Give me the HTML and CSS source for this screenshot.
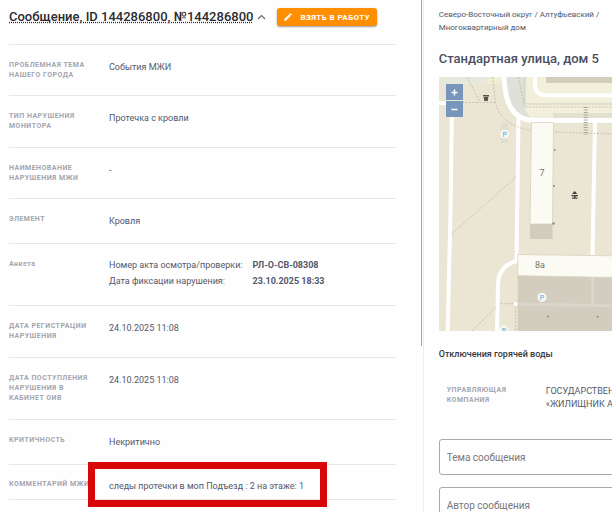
FILE: index.html
```html
<!DOCTYPE html>
<html lang="ru">
<head>
    <meta charset="UTF-8">
    <meta name="viewport" content="width=device-width, initial-scale=1.0">
    <title>Сообщение №144286800</title>
    <link rel="stylesheet" href="styles.css">
</head>
<body>
    <div class="page">
        <main class="details">
            <header class="details-header">
                <h1 class="details-title">Сообщение, ID 144286800, №144286800</h1>
                <button class="toggle-btn" type="button" aria-label="Свернуть">
                    <svg width="9" height="6" viewBox="0 0 9 6"><path d="M1 5l3.500-3.500L8 5" fill="none" stroke="#666" stroke-width="1.1"/></svg>
                </button>
                <button class="take-btn" type="button">
                    <svg width="10" height="10" viewBox="0 0 24 24"><path fill="#fff" d="M3 17.25V21h3.75L17.8 9.94l-3.75-3.75L3 17.25zM20.7 7.04a1 1 0 0 0 0-1.41l-2.34-2.34a1 1 0 0 0-1.41 0l-1.83 1.83 3.75 3.75 1.83-1.83z"/></svg>
                    <span>Взять в работу</span>
                </button>
            </header>

            <dl class="rows">
                <div class="row">
                    <dt class="label">Проблемная тема нашего города</dt>
                    <dd class="value">События МЖИ</dd>
                </div>
                <div class="row roomy">
                    <dt class="label">Тип нарушения монитора</dt>
                    <dd class="value">Протечка с кровли</dd>
                </div>
                <div class="row">
                    <dt class="label">Наименование нарушения МЖИ</dt>
                    <dd class="value">-</dd>
                </div>
                <div class="row">
                    <dt class="label">Элемент</dt>
                    <dd class="value">Кровля</dd>
                </div>
                <div class="row form-row">
                    <dt class="label plain">Анкета</dt>
                    <dd class="value">
                        <table class="form-table">
                            <tr><td>Номер акта осмотра/проверки:</td><td><b>РЛ-О-СВ-08308</b></td></tr>
                            <tr><td>Дата фиксации нарушения:</td><td><b>23.10.2025 18:33</b></td></tr>
                        </table>
                    </dd>
                </div>
                <div class="row roomy">
                    <dt class="label">Дата регистрации нарушения</dt>
                    <dd class="value">24.10.2025 11:08</dd>
                </div>
                <div class="row roomy">
                    <dt class="label">Дата поступления нарушения в кабинет ОИВ</dt>
                    <dd class="value">24.10.2025 11:08</dd>
                </div>
                <div class="row">
                    <dt class="label">Критичность</dt>
                    <dd class="value">Некритично</dd>
                </div>
                <div class="row comment-row">
                    <dt class="label">Комментарий МЖИ</dt>
                    <dd class="value">следы протечки в моп Подъезд : 2 на этаже: 1</dd>
                    <div class="highlight"></div>
                </div>
            </dl>
            <div class="scroll-thumb"></div>
        </main>

        <aside class="object">
            <p class="breadcrumbs">Северо-Восточный округ / Алтуфьевский / Многоквартирный дом</p>
            <h2 class="address">Стандартная улица, дом 5</h2>

            <div class="map">
                <svg class="map-canvas" width="260" height="254" viewBox="0 0 260 254">
                    <rect width="260" height="254" fill="#eae6d3"/>
                    <!-- yards and lawns -->
                    <path d="M0 0h48v7H0z" fill="#e6e8dc"/>
                    <path d="M48 0h16v7H48z" fill="#f1edd3"/>
                    <path d="M67 0h193v43H94L79 36 70 22z" fill="#f2efdb"/>
                    <path d="M67 0h19v32l6 10-14-6-8-14z" fill="#dfe0d8"/>
                    <path d="M114 36h146v11H114z" fill="#e0e1d1"/>
                    <path d="M107 0h153v6H107z" fill="#d2cebc"/>
                    <path d="M62 46h7v20h-7z" fill="#dfdfd2"/>
                    <path d="M86 0v27h174" fill="none" stroke="#d3cfc0"/>
                    <!-- roads -->
                    <g fill="none" stroke="#fff">
                        <path d="M65 0C66 24 72 43 95 43.5h165" stroke-width="5"/>
                        <path d="M96 0v9q1 9 12 9.500h152" stroke-width="4"/>
                        <path d="M0 26h13l-1.500 107L8.700 254" stroke-width="4"/>
                        <path d="M79.500 38L77.500 184Q59 189 59 208L58 254" stroke-width="4"/>
                        <path d="M156 44l-2.500 134" stroke-width="4"/>
                    </g>
                    <!-- footpaths -->
                    <g fill="none" stroke="#bcb6a4" stroke-width=".8" stroke-dasharray="2 1.500">
                        <path d="M28 0l13 25M16 25.500h41M53.500 0l2 16q0 31 36.500 37.500M79.500 0l6 30H260"/>
                        <path d="M116 55l144 5M12.700 157L77 100M61.500 226.700H75M33 254l25-25M76.700 230v24"/>
                    </g>
                    <path d="M146.700 30v28" stroke="#aca795" stroke-width="4" stroke-dasharray="1 1.500"/>
                    <!-- buildings -->
                    <path d="M92.500 45.500h22l-1 101.500H91z" fill="#fbfbf3" stroke="#d8d2c0" stroke-width=".8"/>
                    <path d="M91 147h22.500v15H91z" fill="#d3cdbf"/>
                    <path d="M78.700 198L260 201v53H78.700z" fill="#d3cdbf"/>
                    <path d="M78.700 227l181.300 3.500M153.500 200v28" stroke="#dad6cc" stroke-width="3"/>
                    <path d="M78.700 177.500L260 180v22L78.700 198.700z" fill="#fbfbf3" stroke="#d8d2c0" stroke-width=".8"/>
                    <circle cx="76.700" cy="227" r="2" fill="#fff"/>
                    <g fill="#8d897e">
                        <circle cx="115.700" cy="73" r="1"/><circle cx="115" cy="109" r="1"/><circle cx="114.500" cy="146.500" r="1.200"/>
                        <circle cx="109" cy="239.500" r="1"/><circle cx="158.700" cy="239.700" r="1"/>
                    </g>
                    <!-- waste bin and playground -->
                    <path d="M44 18h6v1.500h-6zM44.700 20h4.600l-.6 4h-3.400z" fill="#55534d"/>
                    <path d="M133 117l2.700-3 2.700 3zM132.500 118h6.500v1.200h-6.500zM135 119h1.500v1.500H135zM133 120.500h5.500v1.200H133z" fill="#44443f"/>
                    <g fill="#f7f8f4">
                        <circle cx="65.700" cy="57" r="4.500"/><circle cx="103" cy="220.300" r="4.500"/><circle cx="65" cy="253" r="4.500"/>
                    </g>
                    <g class="map-parking">
                        <text x="65.700" y="59.500">P</text><text x="103" y="223">P</text><text x="65" y="255.500">P</text>
                    </g>
                    <g class="map-house">
                        <text x="103" y="99">7</text><text x="101" y="191">8а</text>
                    </g>
                </svg>
                <div class="map-zoom">
                    <button class="zoom-btn" type="button" aria-label="Приблизить"><svg width="7" height="7" viewBox="0 0 7 7"><path d="M3.500 .5v6M.5 3.500h6" stroke="#fff" stroke-width="1.500"/></svg></button>
                    <button class="zoom-btn" type="button" aria-label="Отдалить"><svg width="7" height="7" viewBox="0 0 7 7"><path d="M.5 3.500h6" stroke="#fff" stroke-width="1.500"/></svg></button>
                </div>
            </div>

            <h3 class="outages">Отключения горячей воды</h3>

            <dl class="company">
                <dt class="label">Управляющая компания</dt>
                <dd class="value">ГОСУДАРСТВЕННОЕ БЮДЖЕТНОЕ<br>«ЖИЛИЩНИК АЛТУФЬЕВСКОГО»</dd>
            </dl>

            <form class="message-form">
                <input class="field" type="text" aria-label="Тема сообщения" placeholder="Тема сообщения">
                <input class="field" type="text" aria-label="Автор сообщения" placeholder="Автор сообщения">
            </form>
        </aside>
    </div>
</body>
</html>
```
FILE: styles.css
```css
:root {
    --text: #54586a;
    --heading: #4a4e60;
    --label: #a3a5ae;
    --line: #e6e6e8;
    --accent: #ff8f00;
    --mark: #d80808;
}

* {
    margin: 0;
    padding: 0;
    box-sizing: border-box;
}

body {
    font-family: Roboto, "Liberation Sans", sans-serif;
    font-size: 9px;
    color: var(--text);
    background-color: #fefefe;
    overflow: hidden;
}

button {
    border: none;
    cursor: pointer;
    font-family: inherit;
}

.page {
    display: grid;
    grid-template-columns: minmax(0, 9fr) minmax(0, 4fr);
    height: 100vh;
}

/* left panel */
.details {
    position: relative;
    padding: 8px 27px 0 9px;
    border-right: 1px solid #eeeeef;
    overflow: hidden;
}

.details-header {
    display: flex;
    align-items: center;
    height: 36px;
    padding-bottom: 18px;
    white-space: nowrap;
}

.details-title {
    font-size: 13px;
    line-height: 18px;
    font-weight: 500;
    color: #2b2b2e;
    text-decoration: underline dotted;
}

.toggle-btn {
    display: flex;
    padding: 4px;
    background: none;
}

.take-btn {
    display: flex;
    align-items: center;
    gap: 7px;
    height: 18px;
    margin-left: 7px;
    padding: 0 7px 0 6px;
    border-radius: 3px;
    background-color: var(--accent);
    box-shadow: 0 1px 2px rgba(0, 0, 0, 0.4);
    color: #fff;
    font-size: 8px;
    font-weight: 700;
    letter-spacing: 0.05em;
    text-transform: uppercase;
}

.row {
    display: flex;
    gap: 17px;
    padding: 15px 0;
    border-top: 1px solid var(--line);
}

.roomy {
    padding-bottom: 16px;
}

.form-row {
    padding: 13px 0 16px;
}

.label {
    flex: 0 0 83px;
    font-size: 7px;
    line-height: 10px;
    font-weight: 700;
    letter-spacing: 0.07em;
    color: var(--label);
    text-transform: uppercase;
}

.plain {
    padding-top: 2px;
    text-transform: none;
}

.value {
    line-height: 14px;
}

.form-table {
    border-collapse: collapse;
    line-height: 16px;
}

.form-table td:first-child {
    padding-right: 10px;
}

.comment-row {
    position: relative;
    padding: 14px 0 6px;
    border-bottom: 1px solid var(--line);
}

.comment-row .label {
    white-space: nowrap;
}

/* frame round the comment */
.highlight {
    position: absolute;
    top: -3px;
    left: 79px;
    width: 239px;
    height: 45px;
    border: 7px solid var(--mark);
}

.scroll-thumb {
    position: absolute;
    top: 0;
    right: 1px;
    width: 1px;
    height: 346px;
    background-color: #a4a4a6;
}

/* right panel */
.object {
    padding: 8px 0 0 15px;
    overflow: hidden;
}

.breadcrumbs {
    font-size: 8px;
    line-height: 13px;
}

.address {
    margin: 15px 0 9px;
    font-size: 13px;
    line-height: 19px;
    font-weight: 500;
    color: var(--heading);
    white-space: nowrap;
}

.map {
    position: relative;
    height: 254px;
    overflow: hidden;
}

.map-canvas {
    display: block;
}

.map-parking {
    font-size: 7px;
    font-weight: 500;
    fill: #69b3e0;
    text-anchor: middle;
}

.map-house {
    font-size: 9px;
    fill: #77756e;
    text-anchor: middle;
}

.map-zoom {
    position: absolute;
    top: 7px;
    left: 7px;
    display: grid;
    gap: 1px;
}

.zoom-btn {
    display: flex;
    align-items: center;
    justify-content: center;
    width: 17px;
    height: 16px;
    background-color: #7896bb;
}

.outages {
    margin-top: 16px;
    font-size: 9px;
    line-height: 14px;
    font-weight: 500;
    color: #37373b;
}

.company {
    display: flex;
    gap: 16px;
    padding: 24px 8px 28px;
    white-space: nowrap;
}

.company .label {
    white-space: normal;
}

.company .value {
    line-height: 13px;
}

.message-form {
    display: grid;
    gap: 12px;
    width: 260px;
}

.field {
    height: 36px;
    padding: 0 7px;
    border: 1px solid #a9a9ac;
    border-radius: 3px;
    background: none;
    font-family: inherit;
    font-size: 10px;
    color: var(--text);
}

.field::placeholder {
    color: #77777c;
}
```
